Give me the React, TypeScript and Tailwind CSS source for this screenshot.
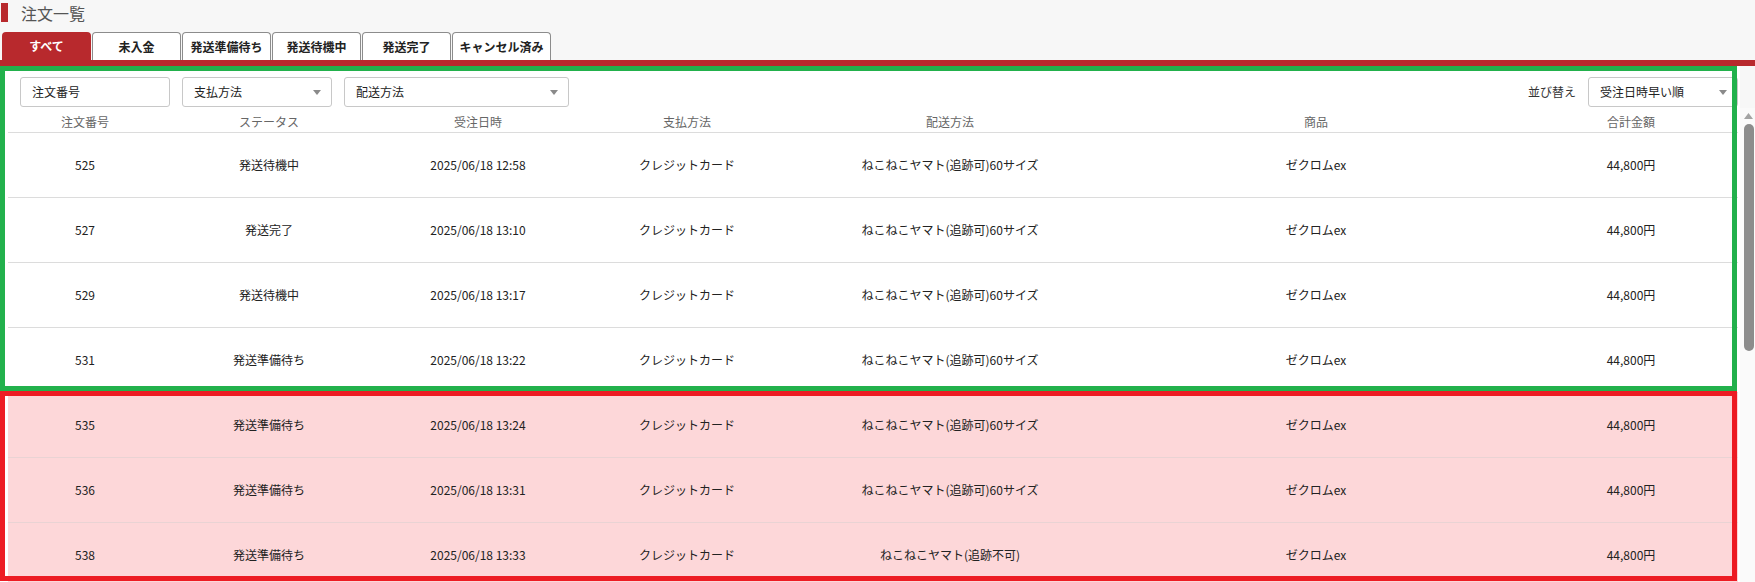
import React from "react";

const tabs = ["すべて", "未入金", "発送準備待ち", "発送待機中", "発送完了", "キャンセル済み"];

const headers = ["注文番号", "ステータス", "受注日時", "支払方法", "配送方法", "商品", "合計金額"];

type Order = {
    id: string;
    status: string;
    date: string;
    shipping: string;
    flagged: boolean;
};

const orders: Order[] = [
    { id: "525", status: "発送待機中", date: "2025/06/18 12:58", shipping: "ねこねこヤマト(追跡可)60サイズ", flagged: false },
    { id: "527", status: "発送完了", date: "2025/06/18 13:10", shipping: "ねこねこヤマト(追跡可)60サイズ", flagged: false },
    { id: "529", status: "発送待機中", date: "2025/06/18 13:17", shipping: "ねこねこヤマト(追跡可)60サイズ", flagged: false },
    { id: "531", status: "発送準備待ち", date: "2025/06/18 13:22", shipping: "ねこねこヤマト(追跡可)60サイズ", flagged: false },
    { id: "535", status: "発送準備待ち", date: "2025/06/18 13:24", shipping: "ねこねこヤマト(追跡可)60サイズ", flagged: true },
    { id: "536", status: "発送準備待ち", date: "2025/06/18 13:31", shipping: "ねこねこヤマト(追跡可)60サイズ", flagged: true },
    { id: "538", status: "発送準備待ち", date: "2025/06/18 13:33", shipping: "ねこねこヤマト(追跡不可)", flagged: true },
];

const cols = "grid grid-cols-[154px_214px_204px_214px_312px_420px_210px_1fr]";

function Caret() {
    return (
        <svg width="8" height="5" viewBox="0 0 8 5" className="shrink-0">
            <path d="M0 0h8L4 5z" fill="#8a8a8a" />
        </svg>
    );
}

function Select({ label, width }: { label: string; width: string }) {
    return (
        <div className={`${width} h-[30px] flex items-center justify-between pl-[11px] pr-[10px] bg-white border border-[#c8c8c8] rounded-[3px] text-[12px] text-[#222]`}>
            <span>{label}</span>
            <Caret />
        </div>
    );
}

export default function App() {
    return (
        <div
            className="w-[1755px] h-[582px] overflow-hidden bg-[#f7f7f7] flex flex-col"
            style={{ fontFamily: '"Noto Sans CJK JP", "Noto Sans", sans-serif' }}
        >
            <div className="h-[32px] flex items-start pt-[3px] pl-[1px] gap-[13px]">
                <div className="w-[7px] h-[19px] bg-[#b8292d]" />
                <h1 className="text-[16px] leading-[20px] text-[#555]">注文一覧</h1>
            </div>

            <div className="h-[28px] flex items-end gap-px pl-[2px]">
                {tabs.map((t, i) => (
                    <div
                        key={t}
                        className={
                            i === 0
                                ? "w-[89px] h-[28px] flex items-center justify-center rounded-t-[4px] bg-[#b8292d] text-white text-[12px] font-bold"
                                : i === tabs.length - 1
                                ? "w-[99px] h-[28px] flex items-center justify-center rounded-t-[4px] bg-white border border-b-0 border-[#8c8c8c] text-[#222] text-[12px] font-bold"
                                : "w-[89px] h-[28px] flex items-center justify-center rounded-t-[4px] bg-white border border-b-0 border-[#8c8c8c] text-[#222] text-[12px] font-bold"
                        }
                    >
                        {t}
                    </div>
                ))}
            </div>
            <div className="h-[6px] bg-[#b8292d]" />

            <div className="flex flex-1 min-h-0">
                <div className="relative w-[1740px] bg-white pl-[8px] pr-[2px] pt-[11px]">
                    <div className="flex items-center pl-[12px] h-[30px]">
                        <div className="w-[150px] h-[30px] flex items-center pl-[11px] bg-white border border-[#c8c8c8] rounded-[3px] text-[12px] text-[#222]">
                            注文番号
                        </div>
                        <div className="ml-[12px]">
                            <Select label="支払方法" width="w-[150px]" />
                        </div>
                        <div className="ml-[12px]">
                            <Select label="配送方法" width="w-[225px]" />
                        </div>
                        <div className="ml-auto flex items-center gap-[12px]">
                            <span className="text-[12px] text-[#333]">並び替え</span>
                            <Select label="受注日時早い順" width="w-[150px]" />
                        </div>
                    </div>

                    <div className={`${cols} mt-[5px] h-[21px] items-center border-b border-[#dcdcdc] text-[12px] text-[#666]`}>
                        {headers.map((h) => (
                            <div key={h} className="text-center">
                                {h}
                            </div>
                        ))}
                        <div />
                    </div>

                    {orders.map((o) => (
                        <div
                            key={o.id}
                            className={`${cols} h-[65px] items-center border-b text-[12px] text-[#222] ${
                                o.flagged ? "bg-[#fdd7d9] border-[#e9d3d4]" : "bg-white border-[#dcdcdc]"
                            }`}
                        >
                            <div className="text-center">{o.id}</div>
                            <div className="text-center">{o.status}</div>
                            <div className="text-center">{o.date}</div>
                            <div className="text-center">クレジットカード</div>
                            <div className="text-center">{o.shipping}</div>
                            <div className="text-center">ゼクロムex</div>
                            <div className="text-center">44,800円</div>
                            <div />
                        </div>
                    ))}

                    {/* annotation boxes */}
                    <div className="pointer-events-none absolute left-0 top-0 w-[1737px] h-[325px] border-[5px] border-[#22b14c]" />
                    <div className="pointer-events-none absolute left-0 top-[325px] w-[1737px] h-[190px] border-[5px] border-[#ed1c24]" />
                </div>

                <div className="w-[15px] flex flex-col">
                    <div className="h-[42px]" />
                    <div className="flex-1 bg-[#fafafa] flex flex-col items-center pl-[2px]">
                        <svg width="9" height="6" viewBox="0 0 9 6" className="mt-[5px]">
                            <path d="M0 6L4.5 0L9 6z" fill="#a3a3a3" />
                        </svg>
                        <div className="mt-[5px] w-[10px] h-[227px] rounded-full bg-[#8c8c8c]" />
                    </div>
                </div>
            </div>
        </div>
    );
}
